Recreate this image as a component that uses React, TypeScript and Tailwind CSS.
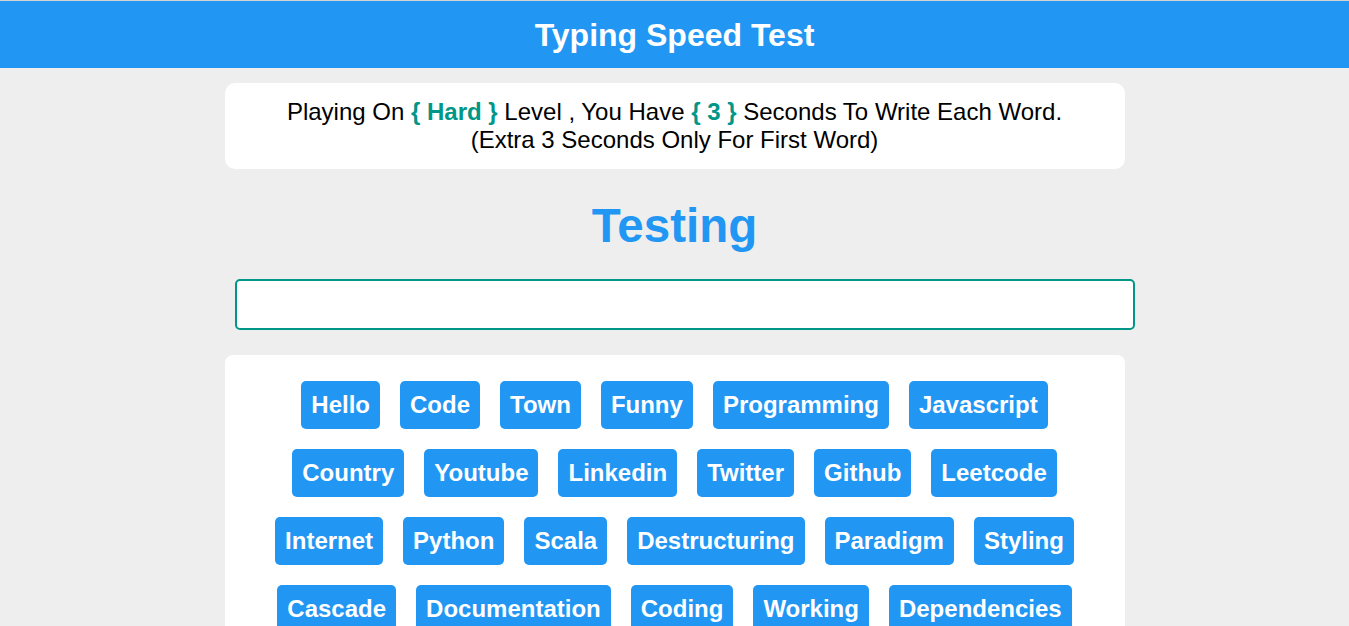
const words = [
  "Hello",
  "Code",
  "Town",
  "Funny",
  "Programming",
  "Javascript",
  "Country",
  "Youtube",
  "Linkedin",
  "Twitter",
  "Github",
  "Leetcode",
  "Internet",
  "Python",
  "Scala",
  "Destructuring",
  "Paradigm",
  "Styling",
  "Cascade",
  "Documentation",
  "Coding",
  "Working",
  "Dependencies",
  "Task",
  "Runner",
  "Roles",
  "Test",
  "Rust",
  "Playing",
];

const App = () => {
  return (
    <div className="min-h-screen border-t border-[#d4d4d4] bg-[#eeeeee] font-['Liberation_Sans',Arial,sans-serif]">
      <header className="flex h-[67px] items-center justify-center bg-[#2196f3]">
        <h1 className="text-[32px] font-bold text-white">Typing Speed Test</h1>
      </header>

      <main className="mx-auto w-[900px]">
        <div className="mt-[15px] rounded-[10px] bg-white px-4 py-[15px] text-center text-[24px] leading-[28px] text-black">
          Playing On <span className="font-bold text-[#009688]">{"{ Hard }"}</span> Level , You Have{" "}
          <span className="font-bold text-[#009688]">{"{ 3 }"}</span> Seconds To Write Each Word.
          <br />
          (Extra 3 Seconds Only For First Word)
        </div>

        <h2 className="mt-[30px] text-center text-[47.5px] leading-[53px] font-bold text-[#2196f3]">Testing</h2>

        <input
          type="text"
          className="mt-[27px] ml-[10px] block h-[51px] w-[900px] rounded-[5px] border-2 border-[#009688] bg-white px-3 outline-none"
        />

        <div className="mt-[25px] flex flex-wrap justify-center rounded-[8px] bg-white px-[15px] py-[16px]">
          {words.map((word) => (
            <span
              key={word}
              className="m-[10px] rounded-[5px] bg-[#2196f3] px-[10px] py-[10px] text-[24px] leading-[28px] font-bold text-white"
            >
              {word}
            </span>
          ))}
        </div>
      </main>
    </div>
  );
};

export default App;
